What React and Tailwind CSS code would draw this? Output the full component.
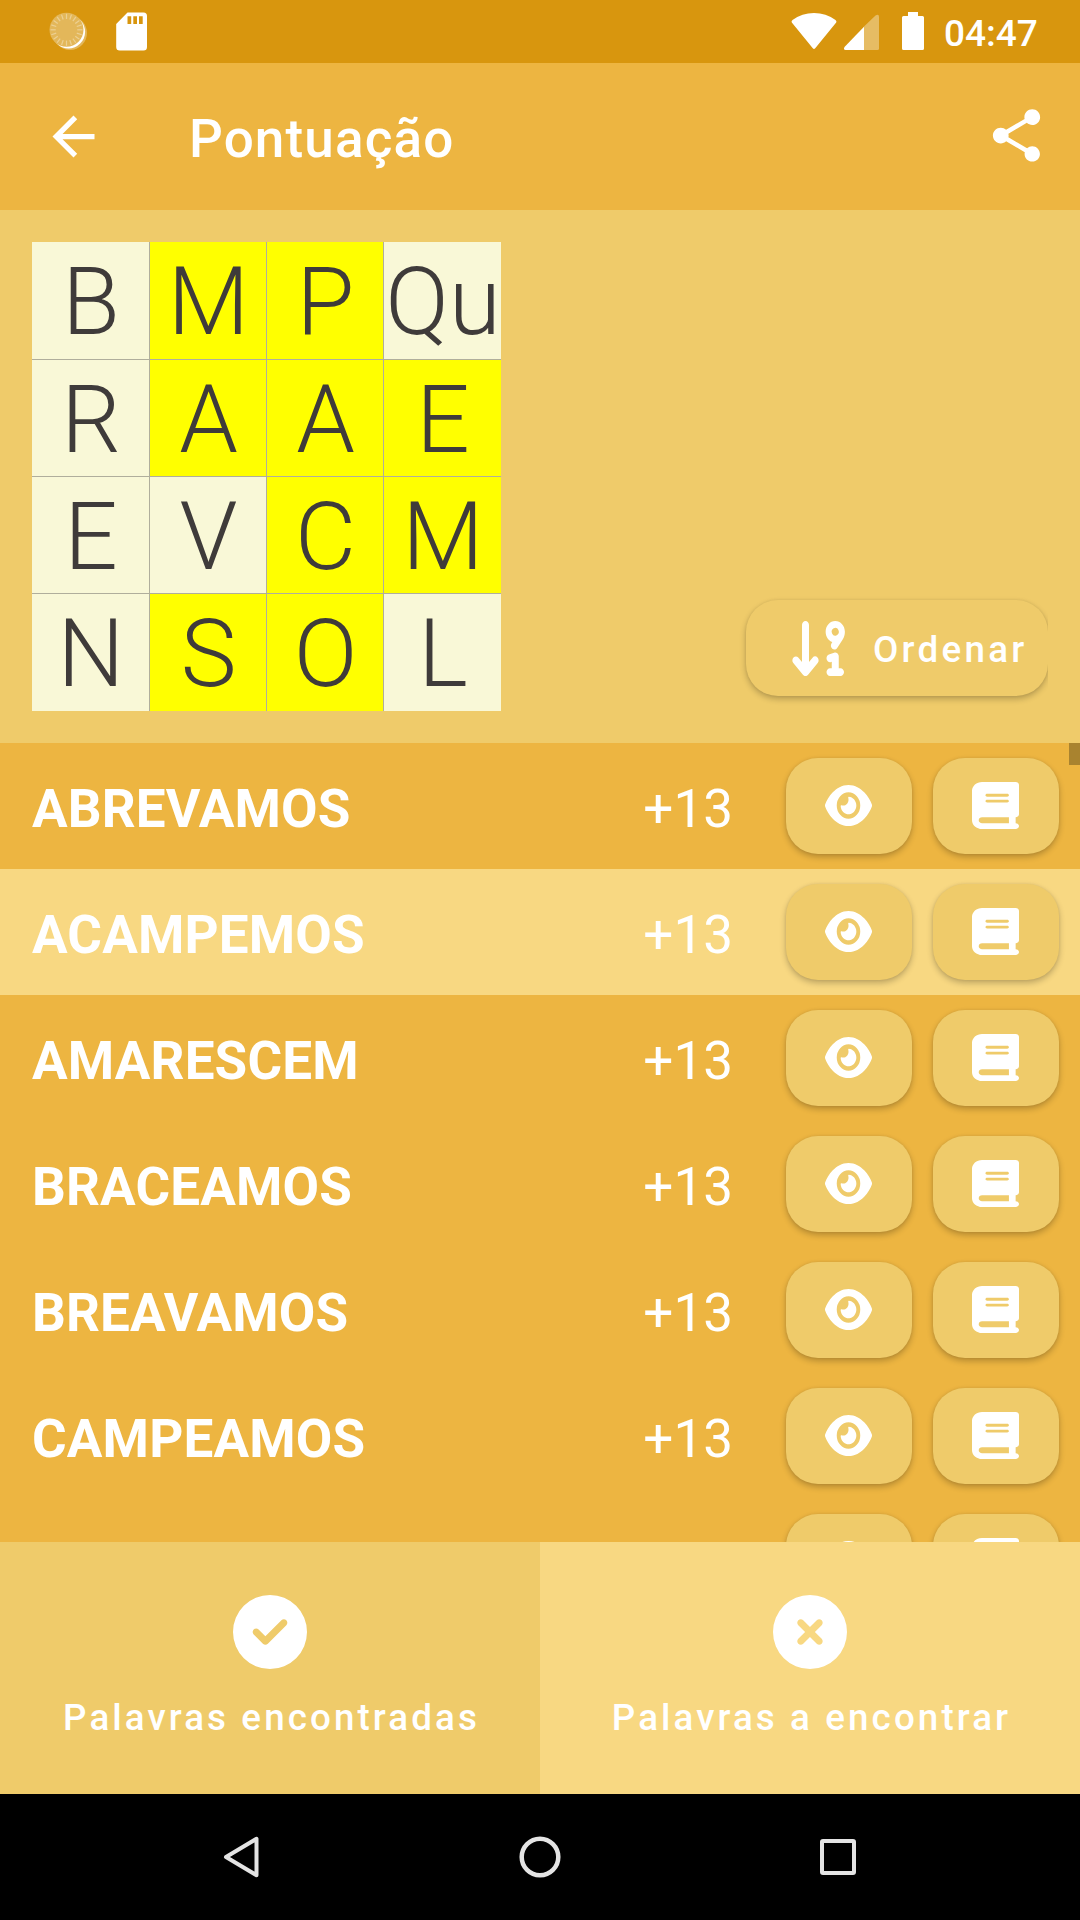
import { MdArrowBack, MdShare } from "react-icons/md";
import { FaArrowDown91, FaBook, FaCircleCheck, FaCircleXmark, FaEye } from "react-icons/fa6";

const BOARD = [
  ["B", 0], ["M", 1], ["P", 1], ["Qu", 0],
  ["R", 0], ["A", 1], ["A", 1], ["E", 1],
  ["E", 0], ["V", 0], ["C", 1], ["M", 1],
  ["N", 0], ["S", 1], ["O", 1], ["L", 0],
];

const WORDS = ["ABREVAMOS", "ACAMPEMOS", "AMARESCEM", "BRACEAMOS", "BREAVAMOS", "CAMPEAMOS", ""];
const SELECTED = 1;

function StatusBar() {
  const ticks = Array.from({ length: 20 }, (_, i) => i * 18);
  return (
    <div className="flex h-[63px] shrink-0 items-start justify-between bg-[#d8960e]">
      <div className="flex">
        <svg className="ml-[49px] h-[63px] w-[40px]" viewBox="49 0 40 63">
          <circle cx="70" cy="33" r="17" fill="#e3b75a" />
          <circle cx="68.5" cy="31.800" r="16.600" fill="#fff" />
          <circle cx="66.500" cy="29.800" r="17" fill="#e3b75a" />
          {ticks.map((a) => (
            <line key={a} x1="66.5" y1="13.8" x2="66.5" y2="19" stroke="#ecd093" strokeWidth="1.2" transform={`rotate(${a} 66.5 29.8)`} />
          ))}
        </svg>
        <svg className="ml-[27px] h-[63px] w-[32px]" viewBox="116 0 32 63">
          <path fillRule="evenodd" fill="#fff" d="M127.5 12.5H143.5A3.5 3.5 0 0 1 147 16V47A3.5 3.5 0 0 1 143.5 50.5H119.7A3.5 3.5 0 0 1 116.200 47V24ZM127.500 16.300V24H131.200V16.300ZM133.300 16.300V24H137V16.300ZM139 16.300V24H142.700V16.300Z" />
        </svg>
      </div>
      <div className="flex">
        <svg className="h-[63px] w-[136px]" viewBox="790 0 136 63" fill="#fff">
          <path d="M791.800 22.500Q791 21 792.500 20Q802 13 814 13Q826 13 835.500 20Q837 21 836.200 22.500L815.200 48.200Q814 49.600 812.800 48.200Z" />
          <path d="M864 26.500L875.500 15.500Q879 13.500 879 17V48.500Q879 50 877.500 50H864Z" opacity="0.36" />
          <path d="M864 26.800V50H845.500Q843 49.500 844.500 47Z" />
          <path d="M908 12H918V16H922.500Q924 16 924 17.500V48.500Q924 50 922.500 50H903.500Q902 50 902 48.500V17.500Q902 16 903.500 16H908Z" />
        </svg>
        <span className="w-[154px] pt-[12px] pl-[18px] text-[37px] leading-[44px] font-medium">04:47</span>
      </div>
    </div>
  );
}

function AppBar() {
  return (
    <header className="flex h-[147px] shrink-0 items-center bg-[#edb541] pr-[32px] pl-[42px]">
      <MdArrowBack size={63} />
      <h1 className="ml-[84px] grow pt-[4px] text-[53px] leading-[62px] font-medium tracking-[1.15px]">Pontuação</h1>
      <MdShare size={63} className="mb-[2px]" />
    </header>
  );
}

function Board() {
  return (
    <div className="grid h-[469px] w-[469px] grid-cols-[117px_117px_117px_118px] grid-rows-[117px_117px_117px_118px]">
      {BOARD.map(([letter, on], i) => (
        <div
          key={i}
          className={`flex items-center justify-center border-[#b0ae9c] ${on ? "bg-[#ffff00]" : "bg-[#f9f8d7]"} ${i % 4 ? "border-l" : ""} ${i > 3 ? "border-t" : ""}`}
        >
          <span className="pt-[3px] pl-px text-[94px] leading-[110px] font-light text-[#3f3b3a]">{letter}</span>
        </div>
      ))}
    </div>
  );
}

const SHADOW = "shadow-[0_3px_6px_rgba(0,0,0,0.24),0_0_3px_rgba(0,0,0,0.07)]";

function IconButton({ icon: Icon, className }) {
  return (
    <button className={`flex h-[96px] w-[126px] items-center justify-center rounded-[32px] bg-[#efcb6a] pr-[2px] pb-[2px] ${SHADOW} ${className}`}>
      <Icon size={47} preserveAspectRatio="none" />
    </button>
  );
}

function WordRow({ word, selected }) {
  return (
    <li className={`flex h-[126px] shrink-0 items-center pr-[21px] pl-[32px] ${selected ? "bg-[#f8d882]" : ""}`}>
      <span className="grow pt-[5px] text-[53px] leading-[62px] font-bold tracking-[0.15px]">{word}</span>
      <span className="mr-[53px] pt-[5px] text-[53px] leading-[62px]">{word ? "+13" : ""}</span>
      <IconButton icon={FaEye} className="mr-[21px]" />
      <IconButton icon={FaBook} className="" />
    </li>
  );
}

function Tab({ icon: Icon, label, className }) {
  return (
    <button className={`flex w-1/2 flex-col items-center pt-[53px] ${className}`}>
      <Icon size={74} preserveAspectRatio="none" />
      <span className="mt-[27px] pl-[3px] text-[36.75px] leading-[43px] font-medium tracking-[3.1px]">{label}</span>
    </button>
  );
}

export default function App() {
  return (
    <div className="flex h-[1920px] w-[1080px] flex-col overflow-hidden font-['Roboto',sans-serif] text-white">
      <StatusBar />
      <AppBar />
      <section className="flex h-[533px] shrink-0 items-start justify-between bg-[#efcb6a] px-[32px] pt-[32px]">
        <Board />
        <div className="mt-[348px] -ml-4 overflow-x-clip pt-[10px] pb-[20px] pl-4">
          <button className={`flex h-[96px] w-[302px] items-center rounded-[32px] bg-[#efcb6a] pl-[42px] ${SHADOW}`}>
            <FaArrowDown91 size={63} preserveAspectRatio="none" />
            <span className="ml-[22px] pt-[2px] text-[36.75px] leading-[43px] font-medium tracking-[3.28px]">Ordenar</span>
          </button>
        </div>
      </section>
      <main className="relative h-[799px] shrink-0 overflow-hidden bg-[#edb541]">
        <ul className="flex flex-col">
          {WORDS.map((word, i) => (
            <WordRow key={i} word={word} selected={i === SELECTED} />
          ))}
        </ul>
        <div className="absolute top-0 right-0 h-[22px] w-[11px] bg-[#a9832f]" />
      </main>
      <nav className="flex h-[252px] shrink-0">
        <Tab icon={FaCircleCheck} label="Palavras encontradas" className="bg-[#efcb6a]" />
        <Tab icon={FaCircleXmark} label="Palavras a encontrar" className="bg-[#f8d882]" />
      </nav>
      <footer className="flex h-[126px] shrink-0 items-center bg-black pl-[220px]">
        <svg width="44" height="44" viewBox="0 0 44 44" fill="none" stroke="#e4e4e4" strokeWidth="4" strokeLinejoin="round">
          <path d="M36.500 3.800V40.200L6 22Z" />
        </svg>
        <svg className="ml-[254px]" width="44" height="44" viewBox="0 0 44 44" fill="none" stroke="#e4e4e4" strokeWidth="4.500">
          <circle cx="22" cy="22" r="18.300" />
        </svg>
        <svg className="ml-[254px]" width="44" height="44" viewBox="0 0 44 44" fill="none" stroke="#e4e4e4" strokeWidth="4">
          <rect x="6" y="6" width="32" height="32" rx="1" />
        </svg>
      </footer>
    </div>
  );
}
